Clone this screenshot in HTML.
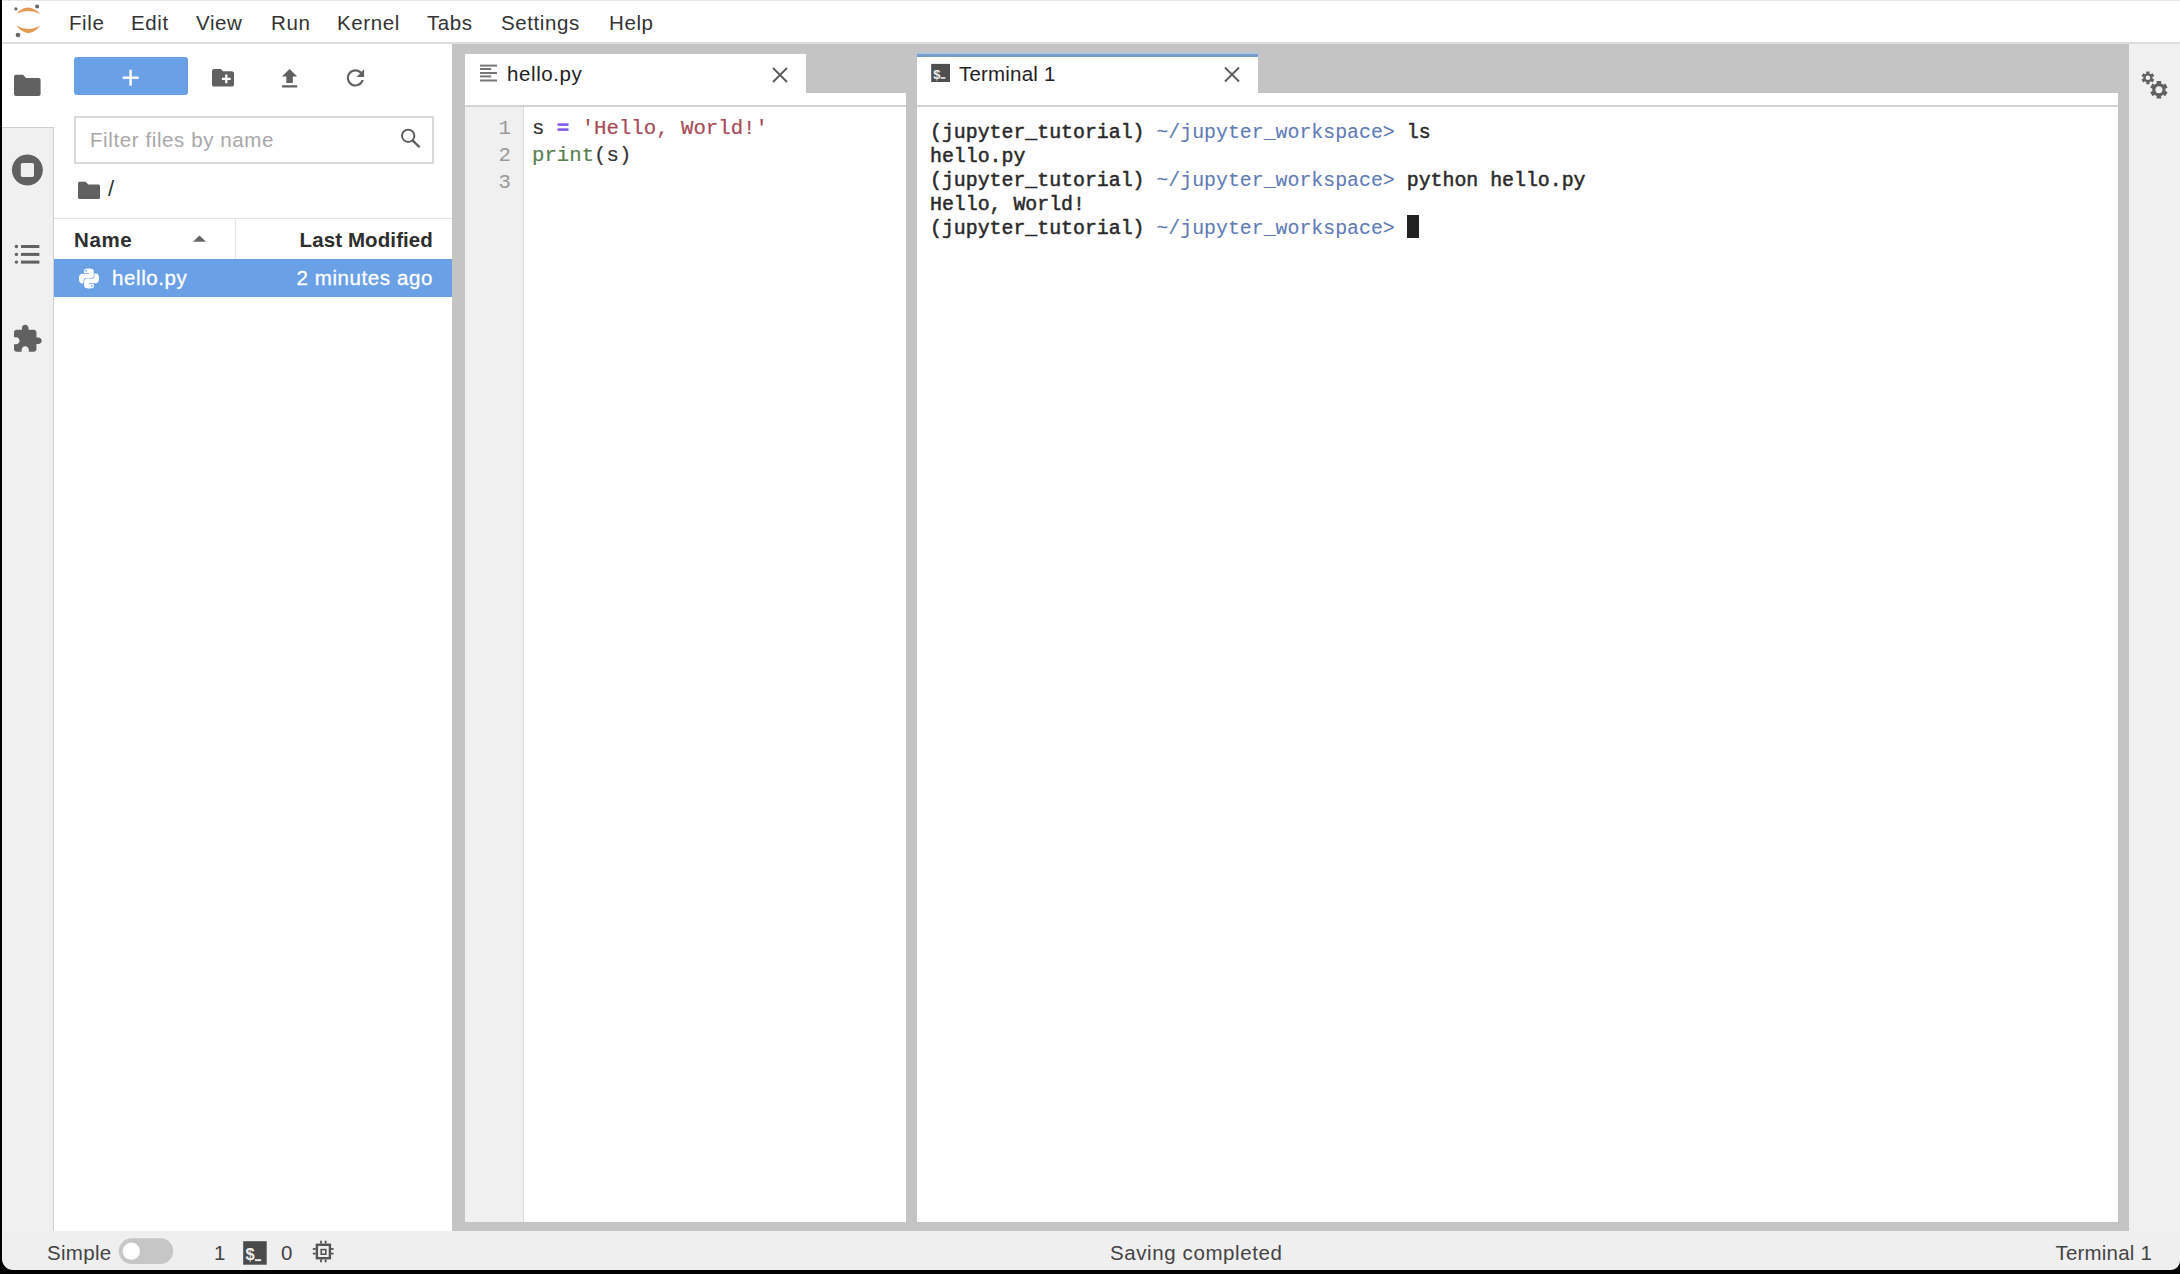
<!DOCTYPE html>
<html><head><meta charset="utf-8">
<style>
*{box-sizing:border-box;margin:0;padding:0}
html,body{width:2180px;height:1274px;overflow:hidden;background:#fff}
body{position:relative;font-family:"Liberation Sans",sans-serif;color:#222}
.a{position:absolute}
.t{position:absolute;font-size:20.5px;line-height:24px;letter-spacing:0.6px;white-space:pre}
.menu .t{color:#333;top:11px}
.mono{font-family:"Liberation Mono",monospace}
.term{position:absolute;left:930px;top:121px;font-family:"Liberation Mono",monospace;font-size:19.88px;line-height:24px;color:#2a2a2a;white-space:pre;-webkit-text-stroke:0.5px #2a2a2a}
.term .p{color:#5f7bb6;-webkit-text-stroke:0.1px #5f7bb6}
.code{position:absolute;left:532px;top:116px;font-family:"Liberation Mono",monospace;font-size:20.7px;line-height:26.9px;color:#333;-webkit-text-stroke:0.2px #333;white-space:pre}
.ln{position:absolute;left:465px;width:46px;top:116px;font-family:"Liberation Mono",monospace;font-size:20.7px;line-height:26.9px;color:#999;text-align:right;white-space:pre}
.op{color:#8258e8;-webkit-text-stroke:0.9px #8258e8}.str{color:#a84b58;-webkit-text-stroke:0.2px #a84b58}.bi{color:#5a8050;-webkit-text-stroke:0.2px #5a8050}
svg.ov{position:absolute;left:0;top:0;width:2180px;height:1274px}
</style></head><body>
<!-- black left strip -->
<div class="a" style="left:0;top:0;width:2px;height:1274px;background:#000"></div>
<div class="a" style="left:2px;top:0;width:2178px;height:1px;background:#e8e8e8"></div>

<!-- menu bar -->
<div class="a menu" style="left:0;top:0;width:2180px;height:42px">
<div class="t" style="left:69px">File</div>
<div class="t" style="left:131px">Edit</div>
<div class="t" style="left:196px">View</div>
<div class="t" style="left:271px">Run</div>
<div class="t" style="left:337px">Kernel</div>
<div class="t" style="left:427px">Tabs</div>
<div class="t" style="left:501px">Settings</div>
<div class="t" style="left:609px">Help</div>
</div>
<div class="a" style="left:2px;top:42px;width:2178px;height:2px;background:#dedede"></div>

<!-- left sidebar -->
<div class="a" style="left:2px;top:44px;width:52px;height:1188px;background:#f0f0f0"></div>
<div class="a" style="left:2px;top:44px;width:52px;height:84px;background:#fff"></div>
<div class="a" style="left:2px;top:127px;width:51px;height:1px;background:#cfcfcf"></div>
<div class="a" style="left:53px;top:127px;width:1px;height:1105px;background:#cfcfcf"></div>

<!-- file browser panel -->
<div class="a" style="left:54px;top:44px;width:398px;height:1188px;background:#fff"></div>
<div class="a" style="left:74px;top:57px;width:114px;height:38px;background:#6aa0e6;border-radius:3px"></div>
<div class="a" style="left:74px;top:116px;width:360px;height:48px;border:2px solid #d8d8d8;background:#fff"></div>
<div class="t" style="left:90px;top:128px;color:#a8a8a8">Filter files by name</div>
<div class="a" style="left:54px;top:218px;width:398px;height:1px;background:#e2e2e2"></div>
<div class="a" style="left:235px;top:218px;width:1px;height:41px;background:#e8e8e8"></div>
<div class="t" style="left:74px;top:228px;font-weight:bold;color:#2e2e2e">Name</div>
<div class="t" style="right:1747px;top:228px;font-weight:bold;color:#2e2e2e;letter-spacing:0.1px">Last Modified</div>
<div class="a" style="left:54px;top:259px;width:398px;height:38px;background:#6aa0e6"></div>
<div class="t" style="left:112px;top:266px;color:#fff;-webkit-text-stroke:0.3px #fff">hello.py</div>
<div class="t" style="right:1747px;top:266px;color:#fff;-webkit-text-stroke:0.3px #fff">2 minutes ago</div>

<!-- dock area -->
<div class="a" style="left:452px;top:44px;width:1677px;height:1188px;background:#c4c4c4"></div>

<!-- editor panel -->
<div class="a" style="left:465px;top:54px;width:341px;height:52px;background:#fff"></div>
<div class="a" style="left:465px;top:93px;width:441px;height:13px;background:#fff"></div>
<div class="a" style="left:465px;top:105px;width:441px;height:2px;background:#d4d4d4"></div>
<div class="a" style="left:465px;top:107px;width:441px;height:1115px;background:#fff"></div>
<div class="a" style="left:465px;top:107px;width:59px;height:1115px;background:#f0f0f0;border-right:1px solid #dcdcdc"></div>
<div class="t" style="left:507px;top:62px;color:#222">hello.py</div>
<div class="ln">1
2
3</div>
<div class="code">s <span class="op">=</span> <span class="str">'Hello, World!'</span>
<span class="bi">print</span>(s)</div>

<!-- terminal panel -->
<div class="a" style="left:917px;top:57px;width:341px;height:49px;background:#fff"></div>
<div class="a" style="left:917px;top:51.5px;width:341px;height:2.5px;background:#b2c6dc"></div>
<div class="a" style="left:917px;top:54px;width:341px;height:3px;background:#779dcf"></div>
<div class="a" style="left:917px;top:93px;width:1201px;height:13px;background:#fff"></div>
<div class="a" style="left:917px;top:105px;width:1201px;height:2px;background:#d4d4d4"></div>
<div class="a" style="left:917px;top:107px;width:1201px;height:1115px;background:#fff"></div>
<div class="t" style="left:959px;top:62px;color:#222;letter-spacing:0.2px">Terminal 1</div>
<div class="term">(jupyter_tutorial) <span class="p">~/jupyter_workspace&gt;</span> ls
hello.py
(jupyter_tutorial) <span class="p">~/jupyter_workspace&gt;</span> python hello.py
Hello, World!
(jupyter_tutorial) <span class="p">~/jupyter_workspace&gt;</span> </div>
<div class="a" style="left:1407px;top:214.6px;width:11.5px;height:23.7px;background:#222"></div>

<!-- right sidebar -->
<div class="a" style="left:2129px;top:44px;width:51px;height:1188px;background:#f0f0f0"></div>

<!-- status bar -->
<div class="a" style="left:2px;top:1231px;width:2178px;height:39px;background:#efefef"></div>
<div class="a" style="left:0;top:1270px;width:2180px;height:4px;background:#000"></div>
<div class="t" style="left:47px;top:1240.5px;color:#444;letter-spacing:0.3px">Simple</div>
<div class="t" style="left:108px;top:177px;color:#333;font-size:22px">/</div>
<div class="t" style="left:214px;top:1240.5px;color:#444">1</div>
<div class="t" style="left:281px;top:1240.5px;color:#444">0</div>
<div class="t" style="left:1110px;top:1240.5px;color:#444">Saving completed</div>
<div class="t" style="right:28px;top:1240.5px;color:#444;letter-spacing:0.2px">Terminal 1</div>

<svg class="ov" viewBox="0 0 2180 1274">
<path d="M16.2,13.8 Q28.4,0.9 40.6,14.2 Q28.4,8.1 16.2,13.8Z" fill="#e39a52"/>
<path d="M16.2,25.4 Q28.4,40.6 40.6,25.2 Q28.4,32.6 16.2,25.4Z" fill="#e39a52"/>
<circle cx="15.9" cy="8.9" r="1.6" fill="#666"/>
<circle cx="37.1" cy="6.4" r="2.0" fill="#666"/>
<circle cx="18" cy="35" r="2.3" fill="#666"/>
<path d="M16,74.7 H23 L26,77.9 H38.6 Q40.6,77.9 40.6,79.9 V93.9 Q40.6,95.9 38.6,95.9 H16 Q14,95.9 14,93.9 V76.7 Q14,74.7 16,74.7Z" fill="#616161"/>
<path fill-rule="evenodd" d="M27.4,154.5 A15.5,15.5 0 1 1 27.39,154.5Z M22.5,163 H32.3 Q34,163 34,164.7 V175.3 Q34,177 32.3,177 H22.5 Q20.8,177 20.8,175.3 V164.7 Q20.8,163 22.5,163Z" fill="#616161"/>
<circle cx="16.4" cy="246.5" r="1.7" fill="#616161"/>
<rect x="21" y="245.0" width="18.4" height="3" fill="#616161"/>
<circle cx="16.4" cy="254.4" r="1.7" fill="#616161"/>
<rect x="21" y="252.9" width="18.4" height="3" fill="#616161"/>
<circle cx="16.4" cy="262.1" r="1.7" fill="#616161"/>
<rect x="21" y="260.6" width="18.4" height="3" fill="#616161"/>
<path transform="translate(11.36,323.4) scale(1.32,1.29)" d="M20.5 11H19V7c0-1.1-.9-2-2-2h-4V3.5C13 2.12 11.88 1 10.5 1S8 2.12 8 3.5V5H4c-1.1 0-1.99.9-1.99 2v3.8H3.5c1.49 0 2.7 1.21 2.7 2.7s-1.21 2.7-2.7 2.7H2V20c0 1.1.9 2 2 2h3.8v-1.5c0-1.49 1.21-2.7 2.7-2.7 1.49 0 2.7 1.21 2.7 2.7V22H17c1.1 0 2-.9 2-2v-4h1.5c1.38 0 2.5-1.12 2.5-2.5S21.88 11 20.5 11z" fill="#616161"/>
<rect x="122.6" y="76.5" width="16" height="2.4" fill="#fff"/>
<rect x="129.4" y="69.7" width="2.4" height="16" fill="#fff"/>
<path transform="translate(209.8,64.6) scale(1.1)" d="M20 6h-8l-2-2H4c-1.11 0-1.99.89-1.99 2L2 18c0 1.11.89 2 2 2h16c1.11 0 2-.89 2-2V8c0-1.11-.89-2-2-2zm-1 8h-3v3h-2v-3h-3v-2h3V9h2v3h3v2z" fill="#616161"/>
<path transform="translate(276.6,65.8) scale(1.08)" d="M9 16h6v-6h4l-7-7-7 7h4zm-4 2h14v2H5z" fill="#616161"/>
<path transform="translate(342.5,65) scale(1.08)" d="M17.65 6.35C16.2 4.9 14.21 4 12 4c-4.42 0-7.99 3.58-7.99 8s3.57 8 7.99 8c3.73 0 6.84-2.55 7.73-6h-2.08c-.82 2.33-3.04 4-5.65 4-3.31 0-6-2.69-6-6s2.69-6 6-6c1.66 0 3.14.69 4.22 1.78L13 11h7V4l-2.35 2.35z" fill="#616161"/>
<circle cx="408.2" cy="135.8" r="6.2" fill="none" stroke="#5a5a5a" stroke-width="1.9"/>
<path d="M412.6,140.4 L419.6,147.2" stroke="#5a5a5a" stroke-width="2.3" fill="none"/>
<path d="M79.5,181.7 H85.5 L88.5,184.5 H98.5 Q100,184.5 100,186.0 V197.5 Q100,199 98.5,199 H79.5 Q78,199 78,197.5 V183.2 Q78,181.7 79.5,181.7Z" fill="#616161"/>
<path d="M193,241.7 L199.5,235.5 L206,241.7Z" fill="#666"/>
<path transform="translate(79,268.5) scale(0.83)" d="M14.25.18l.9.2.73.26.59.3.45.32.34.34.25.34.16.33.1.3.04.26.02.2-.01.13V8.5l-.05.63-.13.55-.21.46-.26.38-.3.31-.33.25-.35.19-.35.14-.33.1-.3.07-.26.04-.21.02H8.77l-.69.05-.59.14-.5.22-.41.27-.33.32-.27.35-.2.36-.15.37-.1.35-.07.32-.04.27-.02.21v3.06H3.17l-.21-.03-.28-.07-.32-.12-.35-.18-.36-.26-.36-.36-.35-.46-.32-.59-.28-.73-.21-.88-.14-1.05-.05-1.23.06-1.22.16-1.04.24-.87.32-.71.36-.57.4-.44.42-.33.42-.24.4-.16.36-.1.32-.05.24-.01h.16l.06.01h8.16v-.83H6.18l-.01-2.75-.02-.37.05-.34.11-.31.17-.28.25-.26.31-.23.38-.2.44-.18.51-.15.58-.12.64-.1.71-.06.77-.04.84-.02 1.27.05zm-6.3 1.98l-.23.33-.08.41.08.41.23.34.33.22.41.09.41-.09.33-.22.23-.34.08-.41-.08-.41-.23-.33-.33-.22-.41-.09-.41.09zm13.09 3.95l.28.06.32.12.35.18.36.27.36.35.35.47.32.59.28.73.21.88.14 1.04.05 1.23-.06 1.23-.16 1.04-.24.86-.32.71-.36.57-.4.45-.42.33-.42.24-.4.16-.36.09-.32.05-.24.02-.16-.01h-8.22v.82h5.84l.01 2.76.02.36-.05.34-.11.31-.17.29-.25.25-.31.24-.38.2-.44.17-.51.15-.58.13-.64.09-.71.07-.77.04-.84.01-1.27-.04-1.07-.14-.9-.2-.73-.25-.59-.3-.45-.33-.34-.34-.25-.34-.16-.33-.1-.3-.04-.25-.02-.2.01-.13v-5.34l.05-.64.13-.54.21-.46.26-.38.3-.32.33-.24.35-.2.35-.14.33-.1.3-.06.26-.04.21-.02.13-.01h5.84l.69-.05.59-.14.5-.21.41-.28.33-.32.27-.35.2-.36.15-.36.1-.35.07-.32.04-.28.02-.21V6.07h2.09l.14.01zm-6.47 14.25l-.23.33-.08.41.08.41.23.33.33.23.41.08.41-.08.33-.23.23-.33.08-.41-.08-.41-.23-.33-.33-.23-.41-.08-.41.08z" fill="#fff"/>
<rect x="480" y="64.6" width="17" height="2" fill="#777"/>
<rect x="480" y="68" width="11.2" height="2" fill="#777"/>
<rect x="480" y="72" width="17" height="2" fill="#777"/>
<rect x="480" y="75.4" width="11.2" height="2" fill="#777"/>
<rect x="480" y="79.5" width="17" height="2" fill="#777"/>
<path d="M773,68 L787,82 M787,68 L773,82" stroke="#5c5c5c" stroke-width="1.9" fill="none"/>
<path d="M1225,67.5 L1239,81.5 M1239,67.5 L1225,81.5" stroke="#5c5c5c" stroke-width="1.9" fill="none"/>
<rect x="931.2" y="63.9" width="18.8" height="18.1" fill="#4f4f4f"/>
<text x="933.3" y="79" font-family="Liberation Sans" font-weight="bold" font-size="13" fill="#eee">$</text>
<rect x="940.8" y="77.2" width="4.6" height="1.6" fill="#eee"/>
<path fill-rule="evenodd" d="M2145.60,73.82 L2146.34,73.47 L2146.19,71.42 L2149.61,71.42 L2149.46,73.47 L2150.20,73.82 L2150.87,74.29 L2152.57,73.13 L2154.28,76.09 L2152.43,76.99 L2152.50,77.80 L2152.43,78.61 L2154.28,79.51 L2152.57,82.47 L2150.87,81.31 L2150.20,81.78 L2149.46,82.13 L2149.61,84.18 L2146.19,84.18 L2146.34,82.13 L2145.60,81.78 L2144.93,81.31 L2143.23,82.47 L2141.52,79.51 L2143.37,78.61 L2143.30,77.80 L2143.37,76.99 L2141.52,76.09 L2143.23,73.13 L2144.93,74.29Z M2150.20,77.80 A2.3,2.3 0 1 0 2145.60,77.80 A2.3,2.3 0 1 0 2150.20,77.80Z" fill="#616161"/>
<path fill-rule="evenodd" d="M2155.60,84.08 L2156.66,83.59 L2156.57,81.11 L2161.23,81.11 L2161.14,83.59 L2162.20,84.08 L2163.16,84.76 L2165.26,83.44 L2167.59,87.47 L2165.40,88.63 L2165.50,89.80 L2165.40,90.97 L2167.59,92.13 L2165.26,96.16 L2163.16,94.84 L2162.20,95.52 L2161.14,96.01 L2161.23,98.49 L2156.57,98.49 L2156.66,96.01 L2155.60,95.52 L2154.64,94.84 L2152.54,96.16 L2150.21,92.13 L2152.40,90.97 L2152.30,89.80 L2152.40,88.63 L2150.21,87.47 L2152.54,83.44 L2154.64,84.76Z M2162.40,89.80 A3.5,3.5 0 1 0 2155.40,89.80 A3.5,3.5 0 1 0 2162.40,89.80Z" fill="#616161"/>
<rect x="118.8" y="1238.2" width="54.4" height="25.7" rx="12.85" fill="#c6c6c6"/>
<circle cx="131.3" cy="1251.2" r="8.6" fill="#fff"/>
<rect x="243.2" y="1241.2" width="23.5" height="23.5" fill="#4a4a4a"/>
<text x="245.4" y="1259.8" font-family="Liberation Sans" font-weight="bold" font-size="16.5" fill="#eee">$</text>
<rect x="255" y="1259.2" width="6.1" height="1.9" fill="#eee"/>
<rect x="316.9" y="1244.8" width="13" height="13.4" fill="none" stroke="#555" stroke-width="2.4"/>
<rect x="321.2" y="1249.6" width="4.6" height="4.6" fill="none" stroke="#555" stroke-width="1.6"/>
<rect x="320.1" y="1240.7" width="1.8" height="3" fill="#555"/>
<rect x="320.1" y="1259.3" width="1.8" height="3" fill="#555"/>
<rect x="324.70000000000005" y="1240.7" width="1.8" height="3" fill="#555"/>
<rect x="324.70000000000005" y="1259.3" width="1.8" height="3" fill="#555"/>
<rect x="312.8" y="1248.1" width="3" height="1.8" fill="#555"/>
<rect x="330.6" y="1248.1" width="3" height="1.8" fill="#555"/>
<rect x="312.8" y="1252.6999999999998" width="3" height="1.8" fill="#555"/>
<rect x="330.6" y="1252.6999999999998" width="3" height="1.8" fill="#555"/>
<path d="M2,1259 A11,11 0 0 0 13,1270 L2,1270Z" fill="#000"/>
<path d="M2180,1261 A9,9 0 0 1 2171,1270 L2180,1270Z" fill="#000"/>
</svg>
</body></html>
